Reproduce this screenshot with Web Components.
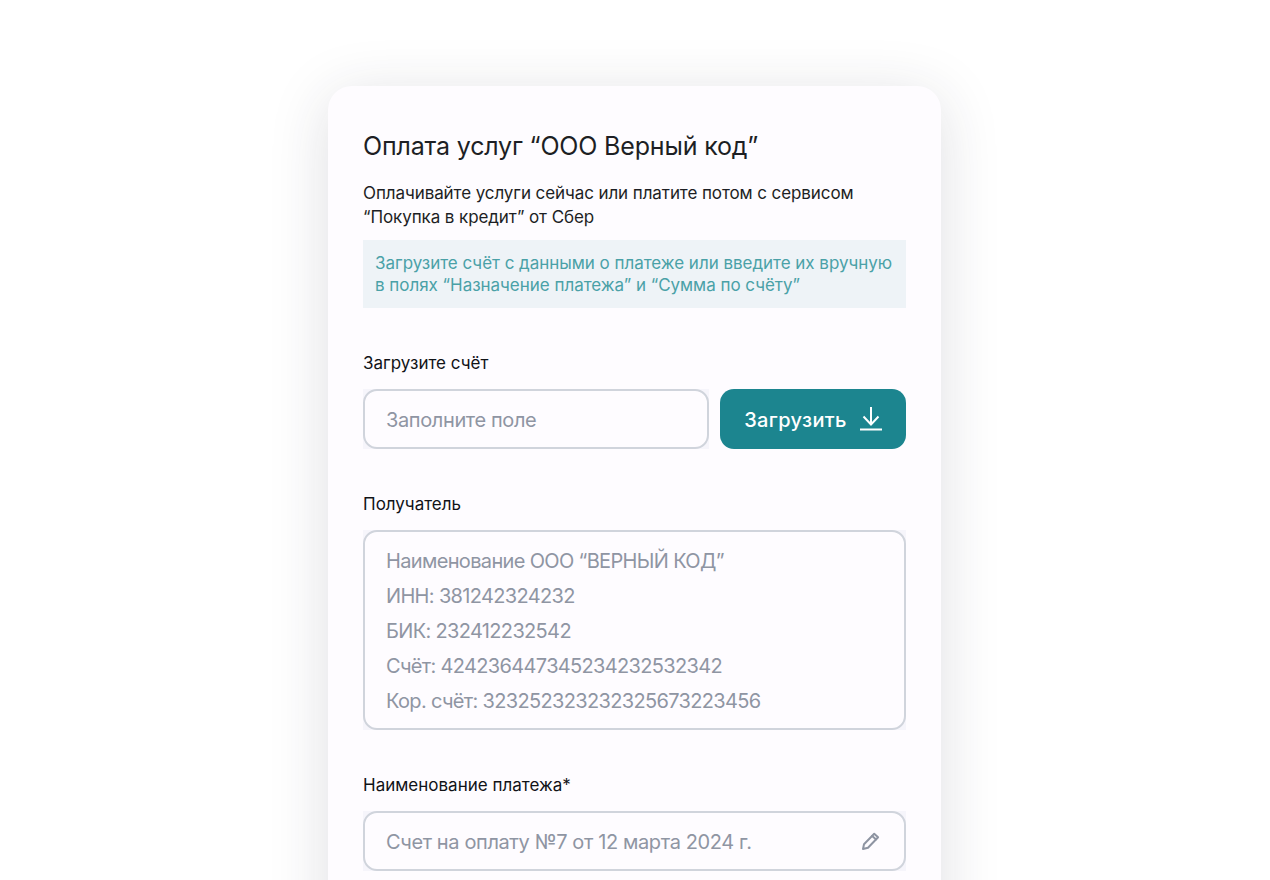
<!DOCTYPE html>
<html><head><meta charset="utf-8"><style>
html,body{margin:0;padding:0;background:#fff;height:880px;overflow:hidden}
body{font-family:Inter,"Noto Sans",sans-serif}
</style></head><body>
<pay-page>
<pay-card>
<h-title>Оплата услуг “ООО Верный код”</h-title>
<pay-note>Оплачивайте услуги сейчас или платите потом с сервисом<br>“Покупка в кредит” от Сбер</pay-note>
<pay-hint>Загрузите счёт с данными о платеже или введите их вручную<br>в полях “Назначение платежа” и “Сумма по счёту”</pay-hint>
<pay-field label="Загрузите счёт">
  <div style="display:flex;gap:11px">
    <pay-input style="flex:1">Заполните поле</pay-input>
    <pay-button>Загрузить</pay-button>
  </div>
</pay-field>
<pay-field label="Получатель">
  <pay-area>
    <div>Наименование ООО “ВЕРНЫЙ КОД”</div>
    <div>ИНН: 381242324232</div>
    <div>БИК: 232412232542</div>
    <div>Счёт: 424236447345234232532342</div>
    <div>Кор. счёт: 323252323232325673223456</div>
  </pay-area>
</pay-field>
<pay-field label="Наименование платежа*">
  <pay-input icon>Счет на оплату №7 от 12 марта 2024 г.</pay-input>
</pay-field>
</pay-card>
</pay-page>
<script>
function def(name, html){
  customElements.define(name, class extends HTMLElement{
    constructor(){super();this.attachShadow({mode:'open'}).innerHTML=html;}
  });
}
def('pay-page',`<style>:host{display:flex;padding:86px 0 0 328px;height:794px;overflow:hidden}</style><slot></slot>`);
def('pay-card',`<style>:host{display:block;box-sizing:border-box;width:613px;height:900px;padding:43px 35px 0;background:#fefcff;border-radius:24px;box-shadow:0 10px 60px rgba(40,40,60,.15)}</style><slot></slot>`);
def('h-title',`<style>:host{display:block;font-size:25px;line-height:34px;font-weight:400;color:#1d1f24;letter-spacing:-.17px}</style><slot></slot>`);
def('pay-note',`<style>:host{display:block;margin-top:18px;font-size:17px;line-height:24px;color:#1d1f24;letter-spacing:-.09px}</style><slot></slot>`);
def('pay-hint',`<style>:host{display:block;margin-top:11px;padding:12px;height:68px;box-sizing:border-box;background:#eef3f7;font-size:17px;line-height:22px;color:#4aa1a7;letter-spacing:-.03px;white-space:nowrap}</style><slot></slot>`);
customElements.define('pay-field',class extends HTMLElement{
  constructor(){super();this.attachShadow({mode:'open'}).innerHTML=`<style>:host{display:block;margin-top:44px}
  .l{font-size:17px;line-height:22px;color:#111317;margin-bottom:15px}</style><div class="l"></div><slot></slot>`;}
  connectedCallback(){this.shadowRoot.querySelector('.l').textContent=this.getAttribute('label');}
});
const box=`box-sizing:border-box;background:#fefcff;border:2px solid #d0d4dc;color:#8f95a3;font-size:20px;`;
customElements.define('pay-input',class extends HTMLElement{
  constructor(){super();this.attachShadow({mode:'open'}).innerHTML=`<style>:host{display:block;background:#f6f5fb}
  .b{${box}letter-spacing:-.38px;height:60px;border-radius:14px;display:flex;align-items:center;justify-content:space-between;padding:0 23px 0 21px}
  span{padding-top:1px}
  svg{display:block;flex:none}</style><div class="b"><span><slot></slot></span><svg id="i" width="20" height="20" viewBox="0 0 20 20" fill="none" stroke="#8e94a2" stroke-width="2" stroke-linejoin="round" stroke-linecap="round"><path d="M2 18l1-4.8L13.2 2.8l3.9 3.4L7 16.8z"/><path d="M11.2 5l3.9 3.4"/></svg></div>`;}
  connectedCallback(){if(!this.hasAttribute('icon'))this.shadowRoot.getElementById('i').remove();}
});
def('pay-area',`<style>:host{display:block;background:#f6f5fb}
  .b{${box}letter-spacing:-.66px;height:200px;border-radius:14px;padding:12px 21px;line-height:35px}</style><div class="b"><slot></slot></div>`);
def('pay-button',`<style>:host{display:flex;align-items:center;justify-content:center;gap:13px;width:186px;height:60px;border-radius:14px;background:#1c858f;color:#fff;font-size:20px;font-weight:500;letter-spacing:.35px}
  span{padding-top:1px}
  svg{display:block}</style><span><slot></slot></span><svg width="22" height="24" viewBox="0 0 22 24" fill="none" stroke="#fff" stroke-width="2"><path d="M11 0v18M3.5 9.5l7.5 8 7.5-8"/><path d="M0 22.5h22"/></svg>`);
</script>
</body></html>
